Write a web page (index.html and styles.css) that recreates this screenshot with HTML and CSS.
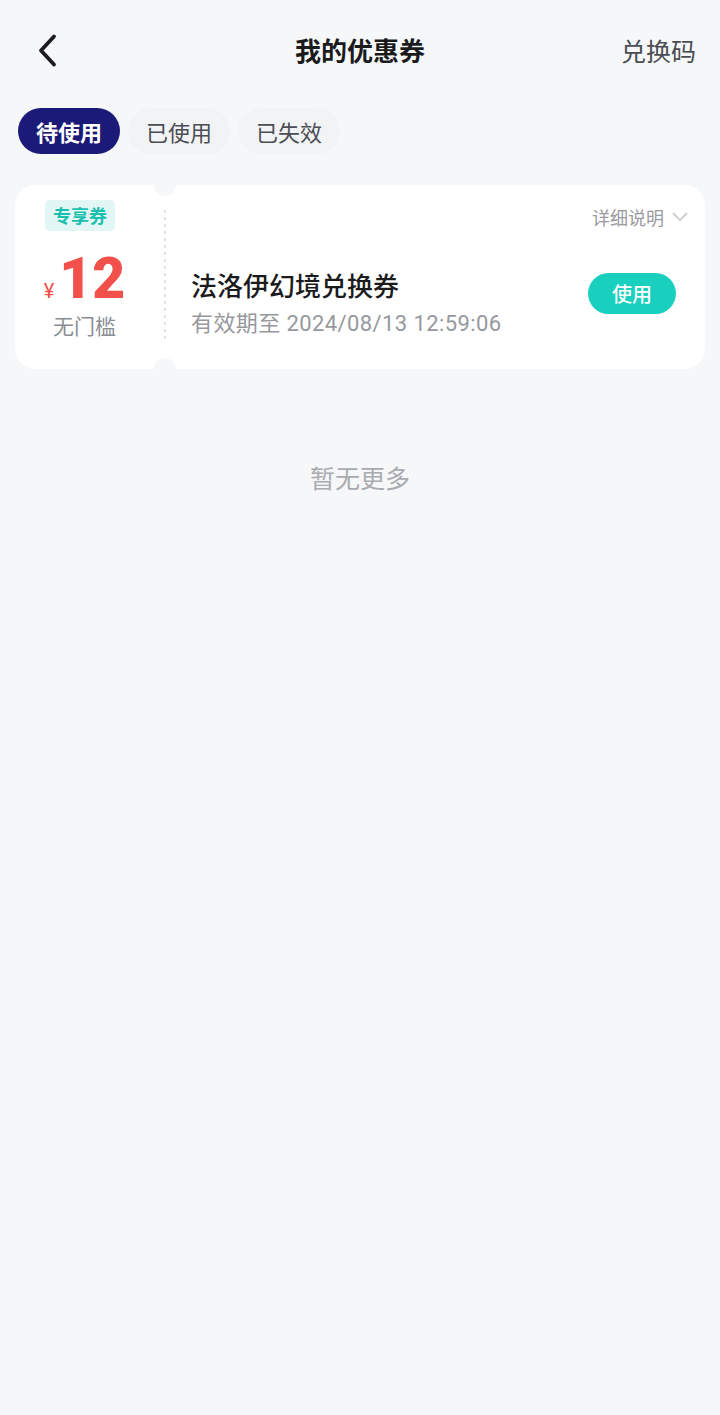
FILE: index.html
```html
<!DOCTYPE html>
<html lang="zh-CN">
<head>
<meta charset="utf-8">
<title>我的优惠券</title>
<link rel="stylesheet" href="styles.css">
</head>
<body>
<header class="topbar">
  <div class="back">
    <svg width="24" height="36" viewBox="0 0 24 36"><polyline points="18,4.5 5,18.5 18,32.5" fill="none" stroke="#1b1b1d" stroke-width="3.8" stroke-linecap="round" stroke-linejoin="round"/></svg>
  </div>
  <h1 class="title">我的优惠券</h1>
  <div class="redeem">兑换码</div>
</header>

<nav class="tabs">
  <span class="tab active">待使用</span>
  <span class="tab">已使用</span>
  <span class="tab">已失效</span>
</nav>

<section class="coupon">
  <div class="c-left">
    <span class="badge">专享券</span>
    <div class="amount"><span class="yen">¥</span><span class="num">12</span></div>
    <div class="cond">无门槛</div>
  </div>
  <div class="divider"></div>
  <div class="c-right">
    <div class="detail">详细说明<svg width="16" height="10" viewBox="0 0 16 10"><polyline points="1.5,1.5 8,8 14.5,1.5" fill="none" stroke="#c4c6ca" stroke-width="1.6" stroke-linecap="round" stroke-linejoin="round"/></svg></div>
    <div class="main">
      <div class="info">
        <div class="name">法洛伊幻境兑换券</div>
        <div class="date">有效期至 2024/08/13 12:59:06</div>
      </div>
      <span class="use">使用</span>
    </div>
  </div>
</section>

<p class="empty">暂无更多</p>
</body>
</html>
```
FILE: styles.css
```css
* { box-sizing: border-box; }
html, body { margin: 0; padding: 0; }
body {
  background: #f6f7f9;
  font-family: "Noto Sans CJK SC", "Noto Sans", sans-serif;
  color: #1b1b1d;
  width: 720px;
  min-height: 1415px;
}
.topbar {
  height: 100px;
  padding: 0 24px;
  display: grid;
  grid-template-columns: 1fr auto 1fr;
  align-items: center;
}
.back { display: flex; align-items: center; margin-left: 12px; }
.back svg { display: block; }
.title {
  margin: 0;
  font-size: 26px;
  font-weight: 700;
  line-height: 34px;
  color: #1b1b1d;
}
.redeem {
  justify-self: end;
  font-size: 25px;
  line-height: 34px;
  color: #4a4d52;
}
.tabs {
  display: flex;
  gap: 8px;
  padding: 8px 18px 0;
}
.tab {
  height: 46px;
  line-height: 46px;
  padding: 0 18px;
  border-radius: 23px;
  font-size: 22px;
  color: #4b4e55;
  background: #f2f3f5;
}
.tab.active {
  background: #1c1a78;
  color: #fff;
  font-weight: 700;
}
.coupon {
  position: relative;
  margin: 31px 15px 0;
  height: 184px;
  background: #fff;
  border-radius: 20px;
  display: flex;
}
.coupon::before, .coupon::after {
  content: "";
  position: absolute;
  left: 139px;
  width: 22px;
  height: 22px;
  border-radius: 50%;
  background: #f6f7f9;
}
.coupon::before { top: -11px; }
.coupon::after { bottom: -11px; }
.c-left {
  width: 149px;
  padding: 15px 10px 0 0;
  display: flex;
  flex-direction: column;
  align-items: center;
}
.badge {
  align-self: flex-start;
  margin-left: 30px;
  height: 31px;
  line-height: 31px;
  padding: 0 8px;
  border-radius: 5px;
  background: #e2f7f5;
  color: #1bbfae;
  font-size: 18px;
  font-weight: 700;
}
.amount {
  margin-top: 20px;
  display: flex;
  align-items: baseline;
  color: #f2514b;
  font-family: Roboto, "Liberation Sans", sans-serif;
  font-weight: 900;
}
.yen { font-size: 20px; font-weight: 400; margin-right: 5px; }
.num { font-size: 57px; line-height: 56px; }
.cond {
  margin-top: 6px;
  font-size: 21px;
  line-height: 24px;
  color: #8a8d92;
}
.divider {
  width: 2px;
  margin: 25px 0 27px;
  background: repeating-linear-gradient(to bottom, #e1e2e5 0 3px, transparent 3px 7px);
}
.c-right {
  flex: 1;
  padding: 20px 17px 0 25px;
  display: flex;
  flex-direction: column;
}
.detail {
  align-self: flex-end;
  display: flex;
  align-items: center;
  gap: 8px;
  font-size: 18px;
  line-height: 24px;
  color: #999ba0;
}
.detail svg { display: block; }
.main {
  margin-top: 39px;
  display: flex;
  align-items: flex-start;
}
.info { flex: 1; }
.name {
  font-size: 26px;
  line-height: 34px;
  font-weight: 500;
  color: #1b1b1d;
}
.date {
  margin-top: 7px;
  font-family: Roboto, "Noto Sans CJK SC", sans-serif;
  font-size: 22px;
  line-height: 30px;
  letter-spacing: 0.4px;
  color: #96989d;
}
.use {
  margin: 5px 12px 0 0;
  height: 41px;
  line-height: 41px;
  padding: 0 24px;
  border-radius: 21px;
  background: #19d0be;
  color: #fff;
  font-size: 20px;
  font-weight: 500;
}
.empty {
  margin: 91px 0 0;
  text-align: center;
  font-size: 25px;
  line-height: 34px;
  color: #a9abb0;
}
```
